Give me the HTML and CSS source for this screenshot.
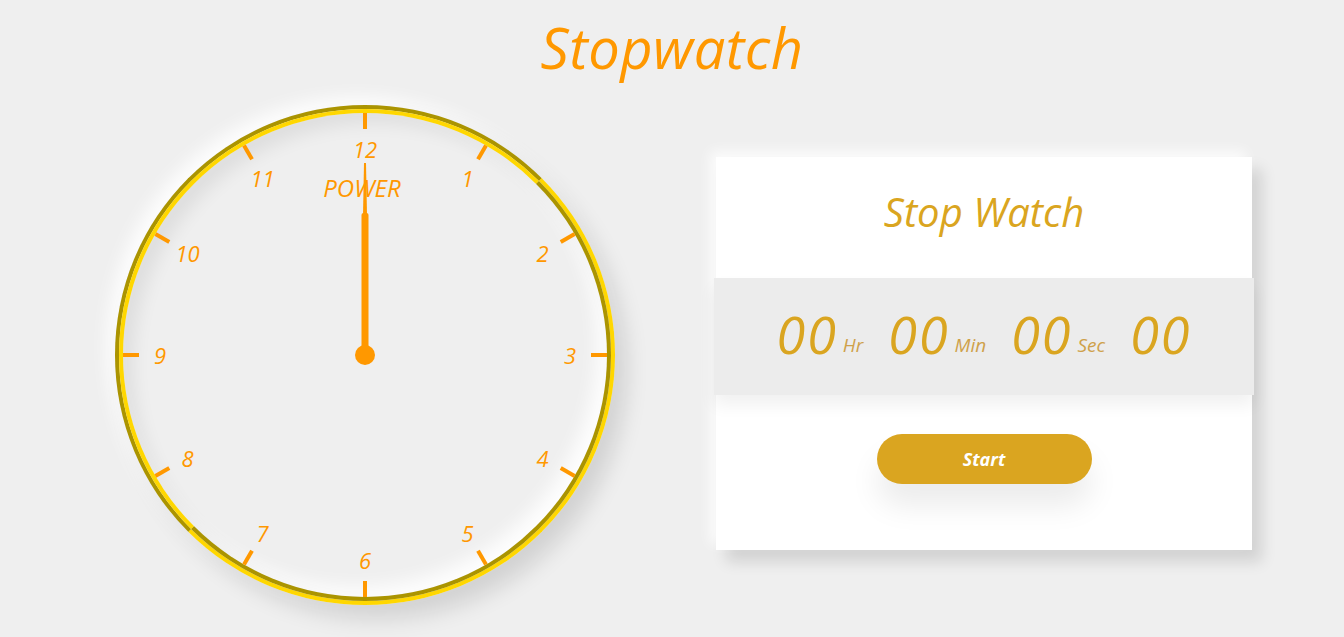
FILE: index.html
```html
<!DOCTYPE html>
<html lang="en">
<head>
<meta charset="utf-8">
<title>Stopwatch</title>
<link rel="stylesheet" href="styles.css">
</head>
<body>
<h1 class="page-title">Stopwatch</h1>
<main class="layout">
  <div class="clock">
    <div class="clock-face">
      <svg class="dial" width="484" height="484" viewBox="0 0 484 484">
        <g class="ticks" stroke="#ff9800" stroke-width="4">
          <line x1="242" y1="0" x2="242" y2="16"/>
          <line x1="242" y1="0" x2="242" y2="16" transform="rotate(30 242 242)"/>
          <line x1="242" y1="0" x2="242" y2="16" transform="rotate(60 242 242)"/>
          <line x1="242" y1="0" x2="242" y2="16" transform="rotate(90 242 242)"/>
          <line x1="242" y1="0" x2="242" y2="16" transform="rotate(120 242 242)"/>
          <line x1="242" y1="0" x2="242" y2="16" transform="rotate(150 242 242)"/>
          <line x1="242" y1="0" x2="242" y2="16" transform="rotate(180 242 242)"/>
          <line x1="242" y1="0" x2="242" y2="16" transform="rotate(210 242 242)"/>
          <line x1="242" y1="0" x2="242" y2="16" transform="rotate(240 242 242)"/>
          <line x1="242" y1="0" x2="242" y2="16" transform="rotate(270 242 242)"/>
          <line x1="242" y1="0" x2="242" y2="16" transform="rotate(300 242 242)"/>
          <line x1="242" y1="0" x2="242" y2="16" transform="rotate(330 242 242)"/>
        </g>
        <g class="numbers">
          <text x="242" y="36">12</text>
          <text x="344.5" y="64.5">1</text>
          <text x="419.5" y="139.5">2</text>
          <text x="447" y="242">3</text>
          <text x="419.5" y="344.5">4</text>
          <text x="344.5" y="419.5">5</text>
          <text x="242" y="447">6</text>
          <text x="139.5" y="419.5">7</text>
          <text x="64.5" y="344.5">8</text>
          <text x="37" y="242">9</text>
          <text x="64.5" y="139.5">10</text>
          <text x="139.5" y="64.5">11</text>
          <text class="power" x="239" y="74">POWER</text>
        </g>
        <polygon points="241,50 243,50 244,102 240,102" fill="#ff9800"/>
        <rect x="238.5" y="100" width="7" height="142" rx="2" fill="#ff9800"/>
        <circle cx="242" cy="242" r="10" fill="#ff9800"/>
      </svg>
    </div>
  </div>

  <section class="card">
    <h2 class="card-title">Stop Watch</h2>
    <div class="display">
      <span class="digits">00</span><span class="unit">Hr</span>
      <span class="digits">00</span><span class="unit">Min</span>
      <span class="digits">00</span><span class="unit">Sec</span>
      <span class="digits">00</span>
    </div>
    <div class="actions">
      <button class="start-btn" type="button">Start</button>
    </div>
  </section>
</main>
</body>
</html>
```

FILE: styles.css
```css
* {
  box-sizing: border-box;
}

html, body {
  margin: 0;
  padding: 0;
}

body {
  background: #efefef;
  font-family: "Open Sans", "Liberation Sans", sans-serif;
  font-style: italic;
  width: 1344px;
  height: 637px;
  overflow: hidden;
}

.page-title {
  margin: 12px 0 0;
  height: 70px;
  line-height: 70px;
  text-align: center;
  font-size: 56px;
  font-weight: 400;
  letter-spacing: 0.5px;
  color: #ff9800;
}

.layout {
  display: flex;
  align-items: center;
  gap: 101px;
  padding-left: 115px;
  margin-top: 23px;
}

.clock {
  width: 500px;
  height: 500px;
  flex: none;
  border-radius: 50%;
  border: 4px solid;
  border-color: #ab9400 #ffd700 #ffd700 #ab9400;
  box-shadow: 12px 14px 22px rgba(0, 0, 0, 0.12), -8px -8px 18px rgba(255, 255, 255, 0.9);
}

.clock-face {
  width: 100%;
  height: 100%;
  border-radius: 50%;
  border: 4px solid;
  border-color: #ffd700 #ab9400 #ab9400 #ffd700;
  background: #efefef;
  box-shadow: inset 10px 10px 18px rgba(0, 0, 0, 0.07), inset -10px -10px 18px rgba(255, 255, 255, 0.9);
}

.dial {
  display: block;
}

.numbers text {
  fill: #ff9800;
  font-family: "Open Sans", "Liberation Sans", sans-serif;
  font-style: italic;
  font-weight: 500;
  font-size: 22px;
  text-anchor: middle;
  dominant-baseline: central;
}

.numbers .power {
  font-size: 24px;
}

.card {
  width: 536px;
  height: 393px;
  flex: none;
  margin-bottom: 3px;
  background: #ffffff;
  display: flex;
  flex-direction: column;
  box-shadow: 10px 12px 14px rgba(0, 0, 0, 0.12), -6px -6px 12px rgba(255, 255, 255, 0.8);
}

.card-title {
  margin: 0;
  height: 121px;
  display: flex;
  align-items: center;
  justify-content: center;
  padding-bottom: 12px;
  font-size: 40px;
  font-weight: 500;
  color: #daa520;
}

.display {
  height: 117px;
  margin: 0 -2px;
  background: #ececec;
  display: flex;
  align-items: center;
  justify-content: center;
  padding-bottom: 6px;
  box-shadow: 0 10px 16px rgba(0, 0, 0, 0.06);
  position: relative;
}

.digits {
  font-size: 52px;
  font-weight: 500;
  color: #daa520;
  letter-spacing: 2px;
  line-height: 1;
}

.unit {
  font-size: 19px;
  color: #cfa14a;
  align-self: center;
  margin: 22px 25px 0 5px;
}

.actions {
  flex: 1;
  display: flex;
  justify-content: center;
  padding-top: 39px;
}

.start-btn {
  width: 215px;
  height: 50px;
  border: none;
  border-radius: 25px;
  background: #daa520;
  color: #ffffff;
  font-family: "Open Sans", "Liberation Sans", sans-serif;
  font-style: italic;
  font-weight: 700;
  font-size: 18px;
  box-shadow: 0 22px 30px rgba(0, 0, 0, 0.08);
}
```
